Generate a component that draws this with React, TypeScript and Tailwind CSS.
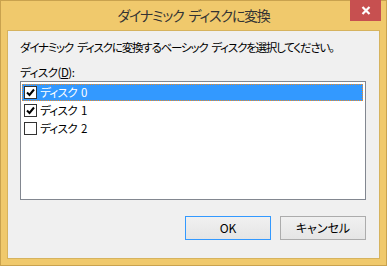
import React from "react";

const font = { fontFamily: '"Noto Sans CJK JP", "Noto Sans", sans-serif' };

function Sp({ w = 4 }: { w?: number }) {
  return <span className={w === 5 ? "inline-block w-[5px]" : "inline-block w-[4px]"} />;
}

function Check({ checked }: { checked: boolean }) {
  return (
    <div className="w-[13px] h-[13px] border border-[#333333] bg-white flex items-center justify-center shrink-0">
      {checked && (
        <svg width="9" height="9" viewBox="0 0 9 9">
          <path d="M1 4.5 L3.5 7 L8 1.5" fill="none" stroke="#000" strokeWidth="2" />
        </svg>
      )}
    </div>
  );
}

export default function App() {
  const rows = [
    { name: "ディスク", num: "0", checked: true, selected: true },
    { name: "ディスク", num: "1", checked: true, selected: false },
    { name: "ディスク", num: "2", checked: false, selected: false },
  ];
  return (
    <div
      className="w-[387px] h-[266px] bg-[#f0c96c] border border-[#c9a24e] flex flex-col [font-feature-settings:'palt']"
      style={font}
    >
      <div className="h-[29px] relative flex items-center justify-center">
        <span className="text-[14px] tracking-[-1.2px] text-[#333333] leading-none pb-[1px] whitespace-nowrap">
          ダイナミック<Sp w={5} />ディスクに変換
        </span>
        <div className="absolute right-[5px] top-[-1px] w-[31px] h-[21px] bg-[#c75050] flex items-center justify-center">
          <svg width="10" height="9" viewBox="0 0 10 9">
            <path d="M1.5 1 L8.5 8 M8.5 1 L1.5 8" stroke="#fff" strokeWidth="2.2" />
          </svg>
        </div>
      </div>
      <div className="flex-1 mx-[6px] mb-[6px] bg-[#f0f0f0] border border-[#d6b35e] flex flex-col pl-[12px] pr-[13px] text-[12px] text-black">
        <div className="mt-[8px] h-[16px] leading-[16px] whitespace-nowrap text-[11.5px] tracking-[-1.2px]">
          ダイナミック<Sp />ディスクに変換するベーシック<Sp />ディスクを選択してください。
        </div>
        <div className="mt-[9px] h-[16px] leading-[16px] text-[11.5px] tracking-[-0.5px]">
          ディスク(<span className="underline">D</span>):
        </div>
        <div className="mt-[1px] h-[119px] bg-white border border-[#828790] pt-[2px] px-[1px]">
          {rows.map((r) => (
            <div
              key={r.num}
              className={
                r.selected
                  ? "h-[17px] mr-[1px] flex items-center gap-[3px] pl-[1px] bg-[#3399ff] text-white border border-dotted border-[#f08a24]"
                  : "h-[17px] mr-[1px] mt-[1px] flex items-center gap-[3px] pl-[2px] text-black"
              }
            >
              <Check checked={r.checked} />
              <span className="leading-none text-[11.5px] tracking-[-0.6px] whitespace-nowrap">
                {r.name}
                <Sp />
                {r.num}
              </span>
            </div>
          ))}
        </div>
        <div className="mt-[16px] flex justify-end gap-[9px]">
          <button className="w-[86px] h-[24px] border border-[#3399ff] bg-gradient-to-b from-[#f0f0f0] to-[#e5e5e5] text-[12px] text-black">
            OK
          </button>
          <button className="w-[86px] h-[24px] border border-[#acacac] bg-gradient-to-b from-[#f0f0f0] to-[#e5e5e5] text-[12px] text-black">
            キャンセル
          </button>
        </div>
      </div>
    </div>
  );
}
